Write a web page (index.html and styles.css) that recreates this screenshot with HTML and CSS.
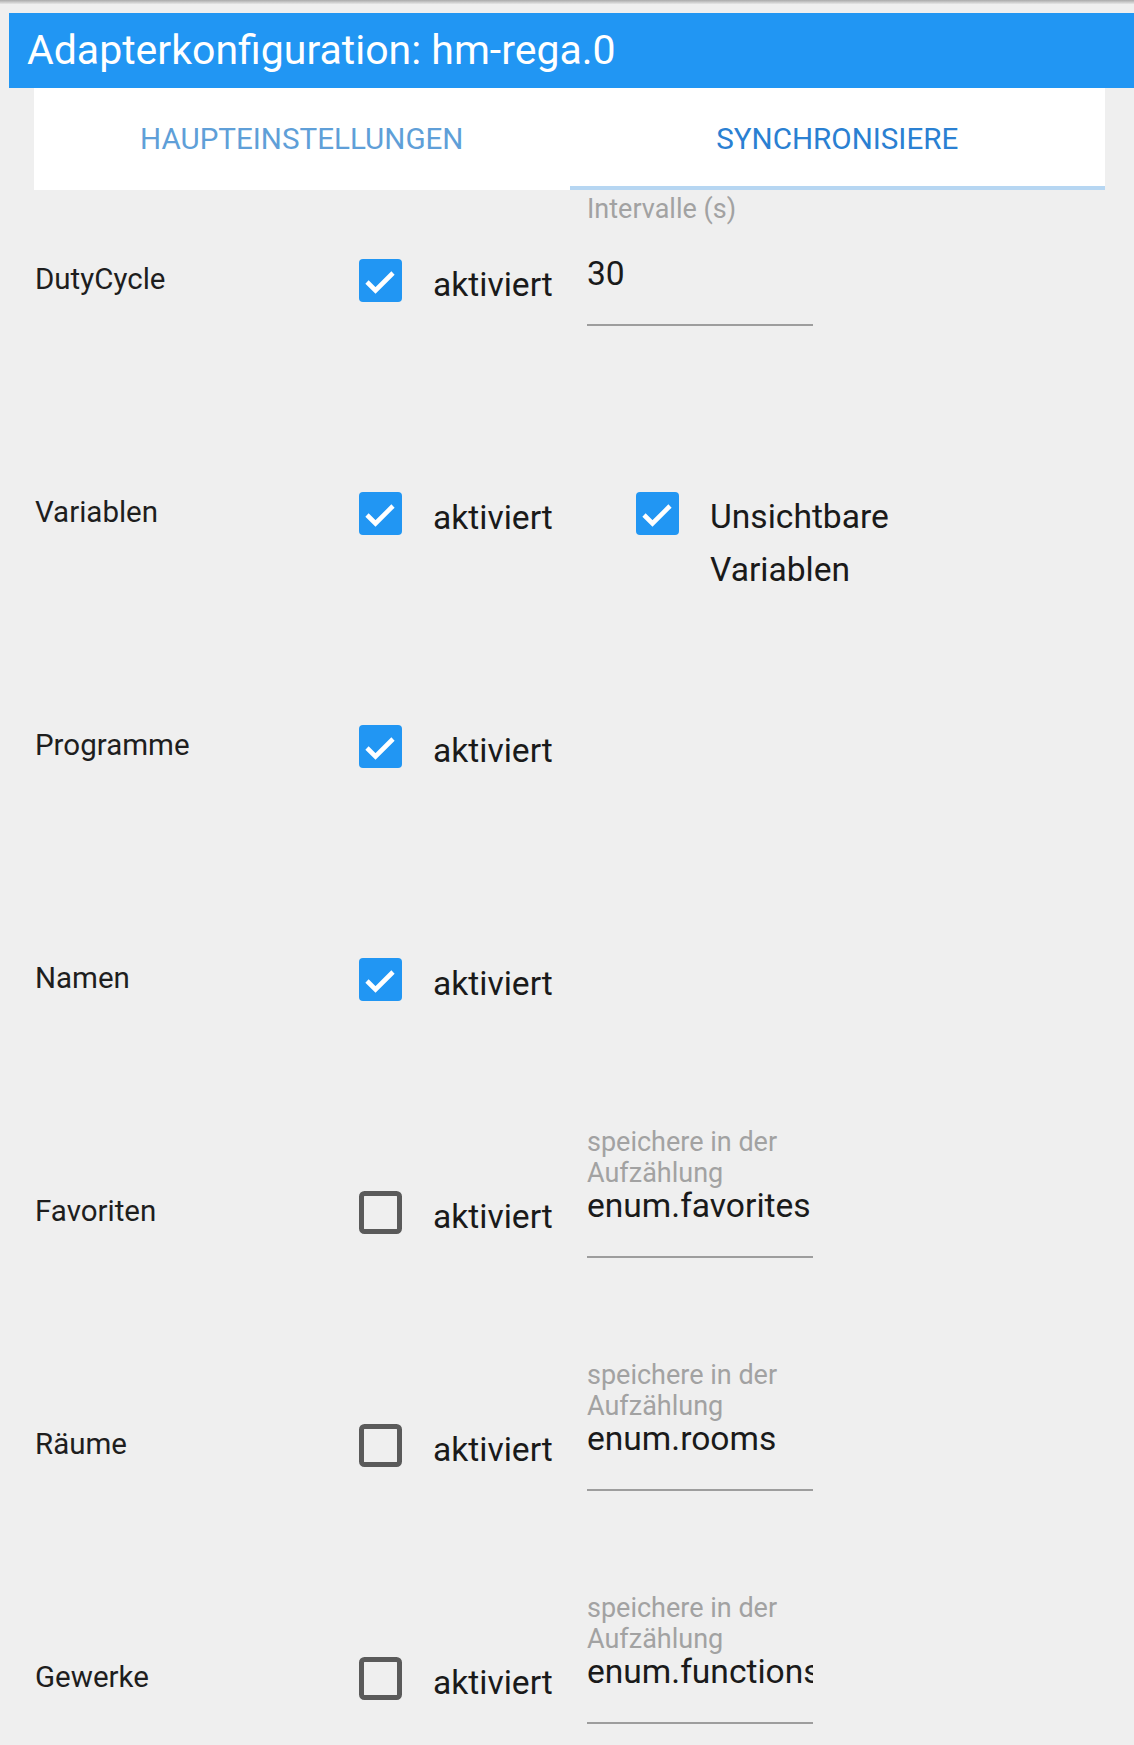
FILE: index.html
```html
<!DOCTYPE html>
<html lang="de">
<head>
<meta charset="utf-8">
<title>Adapterkonfiguration: hm-rega.0</title>
<link rel="stylesheet" href="styles.css">
</head>
<body>
<div class="topshade"></div>
<header class="header">Adapterkonfiguration: hm-rega.0</header>
<nav class="tabs">
  <div class="tab">HAUPTEINSTELLUNGEN</div>
  <div class="tab active">SYNCHRONISIERE</div>
</nav>
<main class="rows">
  <div class="row">
    <div class="label">DutyCycle</div>
    <label class="check">
      <svg class="box" viewBox="0 0 43 43" width="43" height="43"><rect x="0" y="0" width="43" height="43" rx="4" fill="#2196F3"/><polyline points="8,23 16.5,31.5 34,14" fill="none" stroke="#fff" stroke-width="4.6"/></svg>
      <span class="check-text">aktiviert</span>
    </label>
    <div class="field">
      <span class="field-label">Intervalle (s)</span>
      <div class="field-input">30</div>
    </div>
  </div>

  <div class="row">
    <div class="label">Variablen</div>
    <label class="check">
      <svg class="box" viewBox="0 0 43 43" width="43" height="43"><rect x="0" y="0" width="43" height="43" rx="4" fill="#2196F3"/><polyline points="8,23 16.5,31.5 34,14" fill="none" stroke="#fff" stroke-width="4.6"/></svg>
      <span class="check-text">aktiviert</span>
    </label>
    <label class="check check-extra">
      <svg class="box" viewBox="0 0 43 43" width="43" height="43"><rect x="0" y="0" width="43" height="43" rx="4" fill="#2196F3"/><polyline points="8,23 16.5,31.5 34,14" fill="none" stroke="#fff" stroke-width="4.6"/></svg>
      <span class="check-text wrap">Unsichtbare Variablen</span>
    </label>
  </div>

  <div class="row">
    <div class="label">Programme</div>
    <label class="check">
      <svg class="box" viewBox="0 0 43 43" width="43" height="43"><rect x="0" y="0" width="43" height="43" rx="4" fill="#2196F3"/><polyline points="8,23 16.5,31.5 34,14" fill="none" stroke="#fff" stroke-width="4.6"/></svg>
      <span class="check-text">aktiviert</span>
    </label>
  </div>

  <div class="row">
    <div class="label">Namen</div>
    <label class="check">
      <svg class="box" viewBox="0 0 43 43" width="43" height="43"><rect x="0" y="0" width="43" height="43" rx="4" fill="#2196F3"/><polyline points="8,23 16.5,31.5 34,14" fill="none" stroke="#fff" stroke-width="4.6"/></svg>
      <span class="check-text">aktiviert</span>
    </label>
  </div>

  <div class="row">
    <div class="label">Favoriten</div>
    <label class="check">
      <svg class="box" viewBox="0 0 43 43" width="43" height="43"><rect x="2.5" y="2.5" width="38" height="38" rx="3" fill="none" stroke="#5a5a5a" stroke-width="5"/></svg>
      <span class="check-text">aktiviert</span>
    </label>
    <div class="field">
      <span class="field-label multi">speichere in der Aufzählung</span>
      <div class="field-input">enum.favorites</div>
    </div>
  </div>

  <div class="row">
    <div class="label">Räume</div>
    <label class="check">
      <svg class="box" viewBox="0 0 43 43" width="43" height="43"><rect x="2.5" y="2.5" width="38" height="38" rx="3" fill="none" stroke="#5a5a5a" stroke-width="5"/></svg>
      <span class="check-text">aktiviert</span>
    </label>
    <div class="field">
      <span class="field-label multi">speichere in der Aufzählung</span>
      <div class="field-input">enum.rooms</div>
    </div>
  </div>

  <div class="row">
    <div class="label">Gewerke</div>
    <label class="check">
      <svg class="box" viewBox="0 0 43 43" width="43" height="43"><rect x="2.5" y="2.5" width="38" height="38" rx="3" fill="none" stroke="#5a5a5a" stroke-width="5"/></svg>
      <span class="check-text">aktiviert</span>
    </label>
    <div class="field">
      <span class="field-label multi">speichere in der Aufzählung</span>
      <div class="field-input">enum.functions</div>
    </div>
  </div>
</main>
</body>
</html>
```

FILE: styles.css
```css
* { box-sizing: border-box; }

html, body {
  margin: 0;
  padding: 0;
  background: #efefef;
  font-family: Roboto, "Noto Sans", "Liberation Sans", sans-serif;
  color: #1c1c1c;
}

body {
  width: 1134px;
  height: 1745px;
  overflow: hidden;
}

.topshade {
  height: 4px;
  background: linear-gradient(#a9a9a9, #e6e6e6);
}

.header {
  margin: 9px 0 0 9px;
  height: 75px;
  line-height: 75px;
  padding-left: 18px;
  background: #2196F3;
  color: #ffffff;
  font-size: 41px;
  font-weight: 400;
  white-space: nowrap;
}

.tabs {
  display: flex;
  margin: 0 29px 0 34px;
  height: 102px;
  background: #ffffff;
}

.tab {
  flex: 1 1 0;
  display: flex;
  align-items: center;
  justify-content: center;
  font-size: 29.6px;
  line-height: 102px;
  color: #5f9fd8;
  white-space: nowrap;
}

.tab.active {
  color: #2a80d2;
  box-shadow: inset 0 -4px 0 #b6d6f2;
}

.rows {
  display: flex;
  flex-direction: column;
}

.row {
  height: 233px;
  display: grid;
  grid-template-columns: 324px 228px 1fr;
  align-items: start;
  padding-left: 35px;
}

.label {
  margin-top: 71px;
  font-size: 29.5px;
  line-height: 36px;
  color: #1e1e1e;
}

.check {
  margin-top: 69px;
  display: flex;
  align-items: flex-start;
  gap: 31px;
}

.box {
  flex: 0 0 auto;
  display: block;
}

.check-text {
  font-size: 33.6px;
  line-height: 53px;
  margin-top: -1px;
  color: #1a1a1a;
  white-space: nowrap;
}

.check-text.wrap {
  white-space: normal;
  width: 230px;
  margin-top: -2px;
}

.check-extra {
  margin-left: 49px;
  gap: 31px;
}

.field {
  margin-top: 2px;
  width: 226px;
  height: 134px;
  display: grid;
}

.field-label,
.field-input {
  grid-area: 1 / 1;
}

.field-label {
  align-self: start;
  margin-top: 2px;
  font-size: 27px;
  line-height: 30px;
  color: #a2a2a2;
}

.field-label.multi {
  margin-top: 3px;
  line-height: 31px;
}

.field-input {
  align-self: end;
  font-size: 33.6px;
  line-height: 40px;
  padding-bottom: 30px;
  border-bottom: 2px solid #9d9d9d;
  color: #1a1a1a;
  white-space: nowrap;
  overflow: hidden;
}
```
